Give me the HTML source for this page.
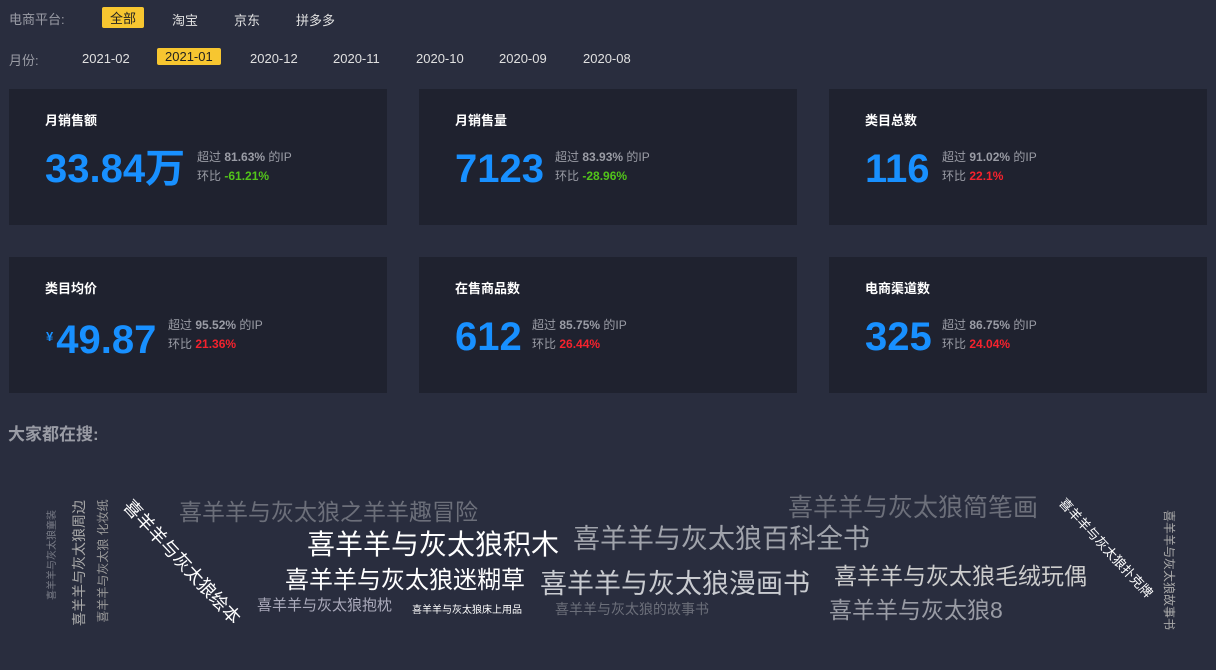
<!DOCTYPE html>
<html><head><meta charset="utf-8"><style>
*{margin:0;padding:0;box-sizing:border-box}
body{width:1216px;height:670px;background:#292d3e;font-family:"Liberation Sans","Noto Sans CJK SC",sans-serif;color:#aaa;position:relative;overflow:hidden}
.row{position:absolute;left:9px;font-size:13px;color:#9a9ca5}
.opt{position:absolute;font-size:13px;color:#e0e0e0;padding:1px 8px;border-radius:2px}
.sel{background:#f7c630;color:#222}
.card{position:absolute;width:378px;height:136px;background:#1f222f}
.card .t{position:absolute;left:36px;top:21px;font-size:13px;font-weight:bold;color:#fff}
.card .n{position:absolute;left:36px;top:56px;font-size:40px;font-weight:bold;color:#1890ff;line-height:48px}
.card .s{position:absolute;top:59px;font-size:12px;color:#9a9ca5;line-height:19px}
.card .s b{font-weight:bold}
.g{color:#52c41a}.r{color:#f5222d}
.w{position:absolute;white-space:nowrap;line-height:1;font-family:"Liberation Sans","Noto Sans CJK SC",sans-serif}
</style></head><body>
<div class="row" style="top:9px">电商平台:</div>
<div class="opt sel" style="left:102px;top:7px">全部</div>
<div class="opt" style="left:164px;top:9px">淘宝</div>
<div class="opt" style="left:226px;top:9px">京东</div>
<div class="opt" style="left:288px;top:9px">拼多多</div>
<div class="row" style="top:50px">月份:</div>
<div class="opt" style="left:74px;top:50px">2021-02</div>
<div class="opt sel" style="left:157px;top:48px">2021-01</div>
<div class="opt" style="left:242px;top:50px">2020-12</div>
<div class="opt" style="left:325px;top:50px">2020-11</div>
<div class="opt" style="left:408px;top:50px">2020-10</div>
<div class="opt" style="left:491px;top:50px">2020-09</div>
<div class="opt" style="left:575px;top:50px">2020-08</div>

<div class="card" style="left:9px;top:89px"><div class="t">月销售额</div><div class="n">33.84万</div><div class="s" style="left:188px">超过 <b>81.63%</b> 的IP<br>环比 <b class="g">-61.21%</b></div></div>
<div class="card" style="left:419px;top:89px"><div class="t">月销售量</div><div class="n">7123</div><div class="s" style="left:136px">超过 <b>83.93%</b> 的IP<br>环比 <b class="g">-28.96%</b></div></div>
<div class="card" style="left:829px;top:89px"><div class="t">类目总数</div><div class="n">116</div><div class="s" style="left:113px">超过 <b>91.02%</b> 的IP<br>环比 <b class="r">22.1%</b></div></div>
<div class="card" style="left:9px;top:257px"><div class="t">类目均价</div><div class="n" style="left:37px"><span style="font-size:13px;vertical-align:12px;margin-right:3px">¥</span>49.87</div><div class="s" style="left:159px">超过 <b>95.52%</b> 的IP<br>环比 <b class="r">21.36%</b></div></div>
<div class="card" style="left:419px;top:257px"><div class="t">在售商品数</div><div class="n">612</div><div class="s" style="left:113px">超过 <b>85.75%</b> 的IP<br>环比 <b class="r">26.44%</b></div></div>
<div class="card" style="left:829px;top:257px"><div class="t">电商渠道数</div><div class="n">325</div><div class="s" style="left:113px">超过 <b>86.75%</b> 的IP<br>环比 <b class="r">24.04%</b></div></div>

<div style="position:absolute;left:8px;top:420px;font-size:17px;font-weight:bold;color:#9a9ca5">大家都在搜:</div>

<div class="w" style="left:179px;top:501px;font-size:23px;color:#6c6f7a">喜羊羊与灰太狼之羊羊趣冒险</div>
<div class="w" style="left:307px;top:531px;font-size:28px;color:#fff">喜羊羊与灰太狼积木</div>
<div class="w" style="left:573px;top:526px;font-size:27px;color:#a0a3ab">喜羊羊与灰太狼百科全书</div>
<div class="w" style="left:788px;top:496px;font-size:25px;color:#6c6f7a">喜羊羊与灰太狼简笔画</div>
<div class="w" style="left:285px;top:569px;font-size:24px;color:#fff">喜羊羊与灰太狼迷糊草</div>
<div class="w" style="left:540px;top:571px;font-size:27px;color:#c9cbd0">喜羊羊与灰太狼漫画书</div>
<div class="w" style="left:834px;top:565px;font-size:23px;color:#ccc">喜羊羊与灰太狼毛绒玩偶</div>
<div class="w" style="left:829px;top:599px;font-size:23px;color:#9a9ca5">喜羊羊与灰太狼8</div>
<div class="w" style="left:257px;top:598px;font-size:15px;color:#aab">喜羊羊与灰太狼抱枕</div>
<div class="w" style="left:412px;top:606px;font-size:10px;color:#fff">喜羊羊与灰太狼床上用品</div>
<div class="w" style="left:555px;top:602px;font-size:14px;color:#6c6f7a">喜羊羊与灰太狼的故事书</div>
<div class="w" style="left:182px;top:562px;font-size:18px;color:#fff;transform:translate(-50%,-50%) rotate(47deg)">喜羊羊与灰太狼绘本</div>
<div class="w" style="left:1106px;top:548px;font-size:13px;color:#fff;transform:translate(-50%,-50%) rotate(47deg)">喜羊羊与灰太狼扑克牌</div>
<div class="w" style="left:53px;top:555px;font-size:10px;color:#7a7d88;transform:translate(-50%,-50%) rotate(-90deg)">喜羊羊与灰太狼童装</div>
<div class="w" style="left:79px;top:563px;font-size:14px;color:#aaa;transform:translate(-50%,-50%) rotate(-90deg)">喜羊羊与灰太狼周边</div>
<div class="w" style="left:103px;top:561px;font-size:12px;color:#999;transform:translate(-50%,-50%) rotate(-90deg)">喜羊羊与灰太狼 化妆纸</div>
<div class="w" style="left:1169px;top:570px;font-size:12px;color:#aaa;transform:translate(-50%,-50%) rotate(90deg)">喜羊羊与灰太狼故事书</div>
</body></html>
